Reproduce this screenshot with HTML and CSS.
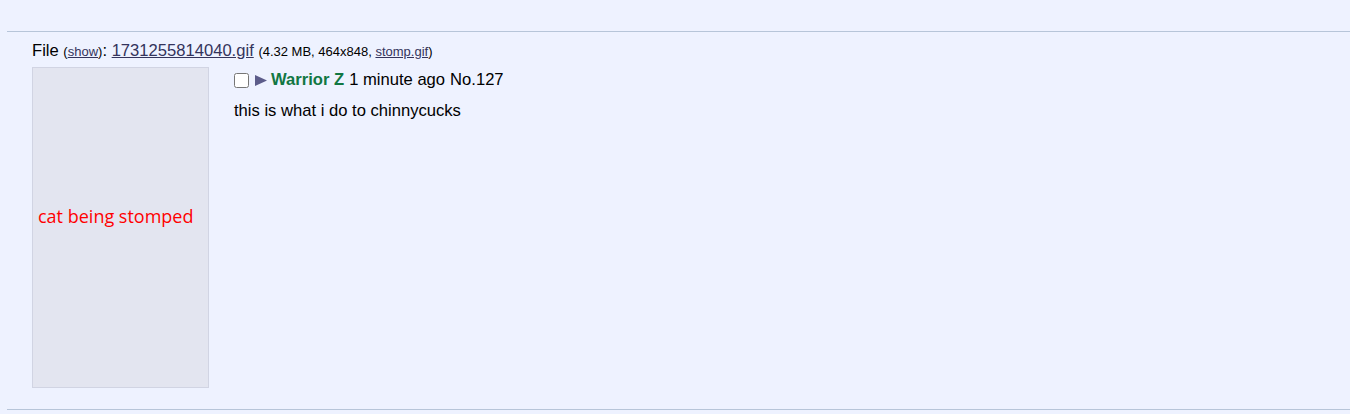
FILE: index.html
```html
<!DOCTYPE html>
<html>
<head>
	<title>Thread</title>
	<meta charset="utf-8">
	<link rel="stylesheet" href="styles.css">
</head>
<body>
	<div class="thread">
		<hr class="sep">

		<div class="post">
			<div class="file-info">
				File <span class="small">(<a href="#">show</a>)</span>: <a href="#" class="file-link">1731255814040.gif</a>
				<span class="small">(4.32 MB, 464x848, <a href="#">stomp.gif</a>)</span>
			</div>

			<div class="post-body">
				<div class="thumb">cat being stomped</div>

				<div class="post-text">
					<div class="post-head">
						<input type="checkbox" class="pick">
						<svg class="arrow" width="12" height="11" viewBox="0 0 12 11"><path d="M0 0 L12 5.5 L0 11 Z" fill="#5c5c8a"/></svg>
						<span class="name">Warrior Z</span>
						<span class="date">1 minute ago</span>
						<span class="num">No.127</span>
					</div>
					<div class="message">this is what i do to chinnycucks</div>
				</div>
			</div>
		</div>

		<hr class="sep bottom">
	</div>
</body>
</html>
```

FILE: styles.css
```css
*,*::after,*::before{
	box-sizing: border-box;
}

body{
	margin: 0;
	background-color: #eef2ff;
	color: #000;
	font-family: 'Liberation Sans', Arial, sans-serif;
	font-size: 16.6px;
}

.thread{
	padding: 31px 0 0 7px;
}

.sep{
	margin: 0;
	border: none;
	border-top: 1px solid #b7c5d9;
	height: 0;
}

.sep.bottom{
	margin-top: 21px;
}

.post{
	padding-left: 25px;
}

.file-info{
	margin-top: 9px;
	line-height: 20px;
}

.small{
	font-size: 13px;
}

a{
	color: #34345c;
}

.post-body{
	display: flex;
	margin-top: 5px;
}

.thumb{
	width: 177px;
	height: 321px;
	background-color: #e3e5f0;
	border: 1px solid #d1d4e3;
	display: flex;
	align-items: center;
	padding: 0 0 24px 5px;
	color: #ff0000;
	font-family: 'Open Sans', sans-serif;
	font-size: 18px;
	margin-right: 25px;
}

.post-head{
	display: flex;
	align-items: center;
	height: 24px;
	margin-top: 1px;
}

.pick{
	margin: 0 6px 0 0;
	width: 15px;
	height: 15px;
}

.arrow{
	margin-right: 4px;
}

.name{
	color: #117743;
	font-weight: bold;
	margin-right: 5px;
}

.date{
	margin-right: 5px;
}

.message{
	margin-top: 9px;
}
```
